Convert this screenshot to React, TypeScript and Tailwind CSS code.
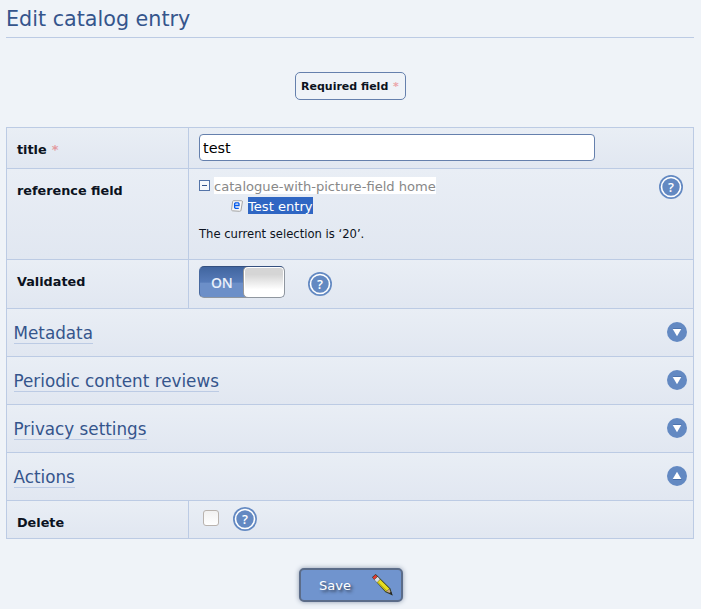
import type { ReactNode } from "react";

const cell = "bg-linear-to-b from-[#e9eef5] to-[#e1e7f1]";

function Row({ label, height, required, labelClass, children }: { label: string; height: string; required?: boolean; labelClass: string; children: ReactNode }) {
  return (
    <div className={`flex border-t border-[#bccbe4] ${height}`}>
      <div className={`w-[182px] shrink-0 border-r border-[#bccbe4] pl-[10px] text-[12.8px] leading-[16px] font-bold ${cell} ${labelClass}`}>
        {label}
        {required && <span className="ml-[5px] text-[#e39a9f]">*</span>}
      </div>
      <div className={`flex grow items-start pl-[10px] ${cell}`}>{children}</div>
    </div>
  );
}

function Help({ className }: { className: string }) {
  return (
    <svg className={`shrink-0 ${className}`} width="24" height="24" viewBox="0 0 24 24">
      <circle cx="12" cy="12" r="12" fill="#6389c2" />
      <circle cx="12" cy="12" r="9.5" fill="none" stroke="#fff" strokeWidth="1.6" />
      <text x="12" y="16.6" textAnchor="middle" fill="#fff" fontSize="13" fontWeight="600" fontFamily="'Open Sans', sans-serif">?</text>
    </svg>
  );
}

function Section({ title, open }: { title: string; open?: boolean }) {
  return (
    <div className={`flex h-[48px] items-start justify-between border-t border-[#bccbe4] pr-[6px] pl-[7px] ${cell}`}>
      <h2 className="mt-[14px] h-[21px] border-b border-[#bccbe4] text-[16.8px] leading-[20px] text-[#35558c]"><span className="-ml-[0.5px]">{title}</span></h2>
      <svg className="mt-[13px]" width="20" height="20" viewBox="0 0 20 20">
        <circle cx="10" cy="10" r="10" fill="#6389c2" />
        {open ? (
          <>
            <path d="M6 13.5h8.5" stroke="#466ca6" strokeWidth="1" />
            <path d="M5.7 13 10 5.8 14.3 13z" fill="#fff" />
          </>
        ) : (
          <>
            <path d="M6 6.8h8.5" stroke="#466ca6" strokeWidth="1" fill="none" />
            <path d="M5.7 7h8.6L10 14.2z" fill="#fff" />
          </>
        )}
      </svg>
    </div>
  );
}

export default function App() {
  return (
    <main className="h-[609px] w-[701px] overflow-hidden bg-[#eff3f8] pr-[7px] pl-[6px] font-['DejaVu_Sans',sans-serif] text-[#0b1220]">
      <h1 className="h-[38px] border-b border-[#bccbe4] pt-[5px] text-[20.7px] leading-[28px] text-[#35558c]">Edit catalog entry</h1>
      <div className="mt-[34px] ml-[289px] h-[28px] w-[111px] rounded-[5px] border border-[#6580ad] pl-[5px] text-[11px] leading-[27px] font-bold whitespace-nowrap">
        Required field <span className="ml-px text-[#eba5a9]">*</span>
      </div>

      <div className="mt-[27px] border-x border-b border-[#bccbe4]">
        <Row label="title" required height="h-[41px]" labelClass="pt-[14px]">
          <input defaultValue="test" className="mt-[6px] h-[27px] w-[396px] rounded-[4px] border border-[#6580ad] bg-white pt-px pl-[3px] text-[14.4px] text-black outline-none" />
        </Row>
        <Row label="reference field" height="h-[91px]" labelClass="pt-[14px]">
          <div className="grow">
            <div className="mt-[8px] flex items-start">
              <svg className="mt-[3px]" width="11" height="11" viewBox="0 0 11 11">
                <rect x=".5" y=".5" width="10" height="10" fill="#f8fafc" stroke="#5474a8" />
                <path d="M3 5.5h5" stroke="#33548c" />
              </svg>
              <span className="ml-[4px] h-[17px] bg-white text-[13.1px] leading-[19px] text-[#888]">catalogue-with-picture-field home</span>
            </div>
            <div className="mt-[3px] flex items-start pl-[32px]">
              <svg className="mt-[3px]" width="12" height="12" viewBox="0 0 12 12">
                <path d="M2.6.7H10.5Q11.6.8 11.4 2L10 10.2Q9.8 11.4 8.6 11.3L1.5 10.8Q.4 10.6.6 9.4L1.6 1.6Q1.8.7 2.6.7z" fill="#f7f7f7" stroke="#a5a5a5" />
                <path d="M3.6 5.5H8V3.7L7.3 2.8H4.4L3.6 3.8V7.4L4.4 8.4H7.8" fill="none" stroke="#075bea" strokeWidth="1.3" />
              </svg>
              <span className="ml-[5px] h-[17px] bg-[#2f66c3] text-[13.1px] leading-[19px] text-white">Test entry</span>
            </div>
            <p className="mt-[13px] text-[11.6px] leading-[14px]">The current selection is ‘20’.</p>
          </div>
          <Help className="mt-[6px] mr-[10px]" />
        </Row>
        <Row label="Validated" height="h-[49px]" labelClass="pt-[14px]">
          <div className="mt-[6px] flex h-[32px] w-[86px] overflow-hidden rounded-[5px] border border-[#8f969f] border-t-[#34507f] border-l-[#48699f] bg-linear-to-b from-[#41659f] from-0% via-[#567bb8] via-50% to-[#6c8fc8] to-55%">
            <span className="w-[43px] shrink-0 pl-[11px] font-['Open_Sans',sans-serif] text-[14px] leading-[31px] font-semibold tracking-[-0.3px] text-[#eaf0fa]">ON</span>
            <span className="-mt-px h-[32px] w-[42px] shrink-0 rounded-[5px] border border-[#999] bg-linear-to-b from-[#d5d5d5] from-25% to-white to-75% shadow-[inset_0_0_0_1px_#fff]" />
          </div>
          <Help className="mt-[12px] ml-[23px]" />
        </Row>
        <Section title="Metadata" />
        <Section title="Periodic content reviews" />
        <Section title="Privacy settings" />
        <Section title="Actions" open />
        <Row label="Delete" height="h-[38px]" labelClass="pt-[14px]">
          <span className="mt-[9px] ml-[4px] size-[16px] rounded-[3px] border border-[#b9b3ae] bg-linear-to-b from-[#f1f1f1] to-white" />
          <Help className="mt-[6px] ml-[14px]" />
        </Row>
      </div>

      <button className="mt-[29px] ml-[293px] flex h-[34px] w-[104px] items-center rounded-[5px] border-2 border-[#5b6c89] bg-[#7094ce] pl-[18px] text-[13px] text-white shadow-[0_0_5px_#8d9aae]">
        <span className="mt-[2px] [text-shadow:2px_2px_3px_#333f55]">Save</span>
        <svg className="ml-[20px]" width="22" height="24" viewBox="0 0 22 24">
          <path d="M1 4.2 4.7 1 19.4 15.6 21.6 22.4 14.5 19.2z" fill="#333a22" />
          <path d="M1.7 4.4 4.6 1.8 6.3 3.4 3.2 6.4z" fill="#e83a32" />
          <path d="M3.5 6.7 6.6 3.8 9 6.2 6 9.4z" fill="#d8dde4" />
          <path d="M6.2 9.5 9.2 6.6 18.5 15.8 15 18.6z" fill="#e6de20" />
          <path d="M7.3 9.8 16 18.2" stroke="#a59d18" strokeWidth="1" />
          <path d="M15.2 18.5 18.5 16 20 20.6z" fill="#c9a886" />
          <path d="M18.4 20 20.2 18.8 21.6 22.4z" fill="#222" />
        </svg>
      </button>
    </main>
  );
}
